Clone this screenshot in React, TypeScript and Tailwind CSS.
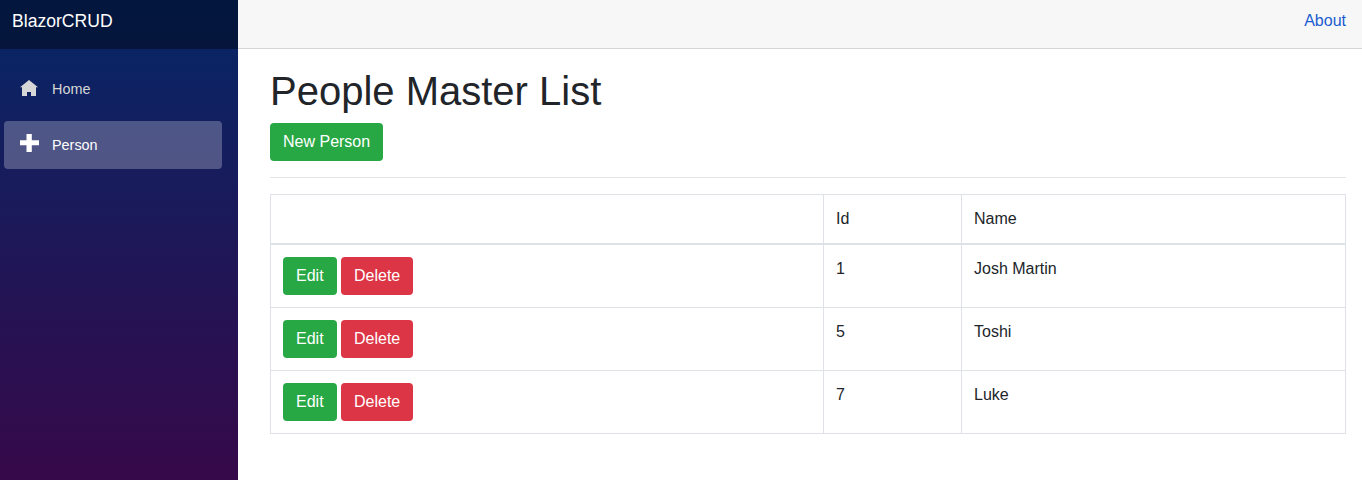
const people = [
  { id: 1, name: 'Josh Martin' },
  { id: 5, name: 'Toshi' },
  { id: 7, name: 'Luke' },
];

function HomeIcon() {
  return (
    <svg className="mb-0.5 h-[17px] w-[18px]" viewBox="0 0 18 17" fill="currentColor">
      <path d="M9 0L0 7.2h2V16h5v-4h4v4h5V7.2h2z" />
    </svg>
  );
}

function PlusIcon() {
  return (
    <svg className="mb-1 h-[18px] w-[19px]" viewBox="0 0 19 18" fill="currentColor">
      <path d="M6.5 0v6.3H0v5h6.5V18h5.3v-6.7H19v-5h-7.2V0z" />
    </svg>
  );
}

function Sidebar() {
  return (
    <aside className="flex w-[238px] shrink-0 flex-col bg-linear-to-b/srgb from-[#052767] to-[#3a0647] to-[108%]">
      <div className="flex h-[49px] items-center bg-black/40 px-3 pb-1.5 text-[17.6px] text-white">BlazorCRUD</div>
      <nav className="flex flex-col gap-2 pt-4 pr-4 pl-1 text-[14.4px]">
        <a className="flex h-12 items-center rounded px-4 text-[#d7d7d7]">
          <span className="w-8"><HomeIcon /></span>
          <span className="pt-0.5">Home</span>
        </a>
        <a className="flex h-12 items-center rounded bg-white/25 px-4 text-white">
          <span className="w-8"><PlusIcon /></span>
          <span className="pt-0.5">Person</span>
        </a>
      </nav>
    </aside>
  );
}

export default function App() {
  return (
    <div className="flex h-[480px] w-full overflow-hidden bg-white font-['Liberation_Sans',Arial,sans-serif] text-base text-[#212529]">
      <Sidebar />
      <div className="min-w-0 flex-1">
        <header className="flex h-[49px] items-center justify-end border-b border-[#d6d5d5] bg-[#f7f7f7] px-4 pb-1.5">
          <a className="text-[#1b5cd0]">About</a>
        </header>
        <main className="pt-[18px] pr-4 pl-8">
          <h1 className="mb-2 text-[40px] leading-[48px]">People Master List</h1>
          <button className="block h-[38px] rounded bg-[#28a745] px-[13px] text-white">New Person</button>
          <hr className="my-4 border-t border-black/10" />
          <table className="w-full table-fixed border-separate border-spacing-0 border-t border-l border-[#dee2e6] text-left">
            <colgroup>
              <col className="w-[553px]" />
              <col className="w-[138px]" />
              <col />
            </colgroup>
            <thead>
              <tr className="h-[50px] align-top">
                <td className="border-r border-b-2 border-[#dee2e6]" />
                <td className="border-r border-b-2 border-[#dee2e6] px-3 pt-3">Id</td>
                <td className="border-r border-b-2 border-[#dee2e6] px-3 pt-3">Name</td>
              </tr>
            </thead>
            <tbody>
              {people.map((p) => (
                <tr key={p.id} className="h-[63px] align-top">
                  <td className="border-r border-b border-[#dee2e6] px-3 pt-3">
                    <div className="flex gap-[4.45px]">
                      <button className="h-[38px] rounded bg-[#28a745] px-[13px] text-white">Edit</button>
                      <button className="h-[38px] rounded bg-[#dc3545] px-[13px] text-white">Delete</button>
                    </div>
                  </td>
                  <td className="border-r border-b border-[#dee2e6] px-3 pt-3">{p.id}</td>
                  <td className="border-r border-b border-[#dee2e6] px-3 pt-3">{p.name}</td>
                </tr>
              ))}
            </tbody>
          </table>
        </main>
      </div>
    </div>
  );
}
